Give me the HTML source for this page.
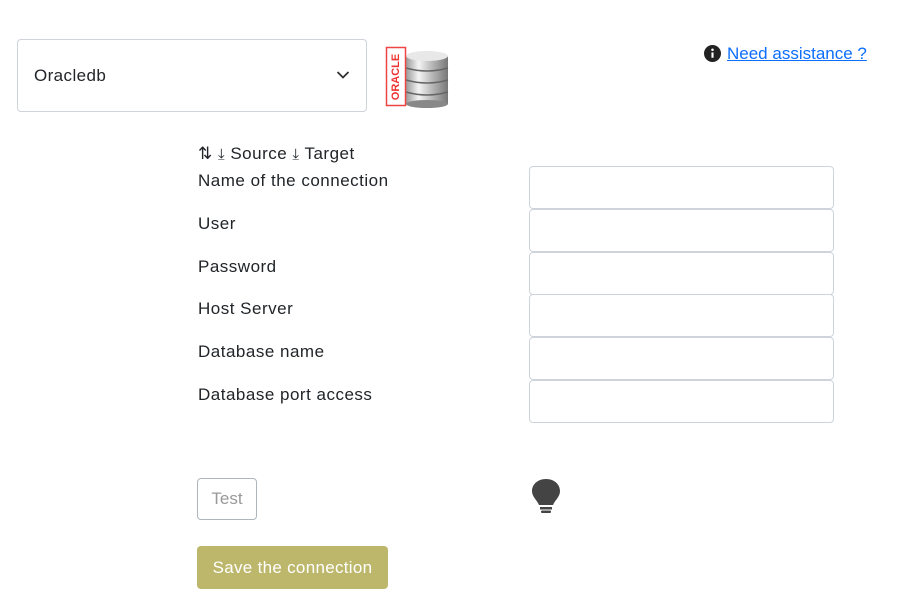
<!DOCTYPE html>
<html><head><style>
*{box-sizing:border-box}
body{margin:0;width:900px;height:609px;background:#fff;font-family:"Liberation Sans",sans-serif;color:#212529;position:relative;overflow:hidden}
.a{position:absolute}
.sel{left:17px;top:39px;width:350px;height:73px;border:1px solid #ced4da;border-radius:4px;font-size:17px;letter-spacing:.4px;padding:26px 0 0 16px}
.lbl{left:198px;font-size:17px;letter-spacing:.5px}
.in{left:529px;width:305px;height:43px;border:1px solid #ced4da;border-radius:4px}
</style></head><body>
<div class="a sel">Oracledb
<svg class="a" style="left:318px;top:30px" width="14" height="10" viewBox="0 0 14 10"><path d="M1.5 2 L7 7.5 L12.5 2" fill="none" stroke="#333" stroke-width="1.8"/></svg></div>
<svg class="a" style="left:384px;top:44px" width="70" height="66" viewBox="0 0 70 66">
<defs><linearGradient id="g" x1="0" x2="1"><stop offset="0" stop-color="#999"/><stop offset=".3" stop-color="#f4f4f4"/><stop offset=".6" stop-color="#bbb"/><stop offset="1" stop-color="#777"/></linearGradient></defs>
<rect x="22" y="12" width="42" height="48" fill="url(#g)"/>
<ellipse cx="43" cy="60" rx="21" ry="4" fill="#888"/>
<ellipse cx="43" cy="12" rx="21" ry="5" fill="#e8e8e8"/>
<path d="M22 24 Q43 30 64 24 M22 36 Q43 42 64 36 M22 48 Q43 54 64 48" stroke="#666" stroke-width="1.5" fill="none"/>
<rect x="2.5" y="3.5" width="19" height="58" fill="#fff" stroke="#e44" stroke-width="1.5"/>
<text x="12" y="33" transform="rotate(-90 12 33)" font-size="11" font-weight="bold" fill="#e33" text-anchor="middle" dominant-baseline="middle" font-family="Liberation Sans">ORACLE</text>
</svg>
<svg class="a" style="left:704px;top:45px" width="17" height="17" viewBox="0 0 16 16"><circle cx="8" cy="8" r="8" fill="#222"/><rect x="7" y="7" width="2" height="5" fill="#fff"/><circle cx="8" cy="4.5" r="1.2" fill="#fff"/></svg>
<div class="a" style="left:727px;top:44px;font-size:17px;color:#0d6efd;text-decoration:underline">Need assistance ?</div>
<div class="a lbl" style="top:144px">⇅ <span style="font-size:15px">⤓</span> Source <span style="font-size:15px">⤓</span> Target</div>
<div class="a lbl" style="top:171px">Name of the connection</div>
<div class="a lbl" style="top:214px">User</div>
<div class="a lbl" style="top:257px">Password</div>
<div class="a lbl" style="top:299px">Host Server</div>
<div class="a lbl" style="top:342px">Database name</div>
<div class="a lbl" style="top:385px">Database port access</div>
<div class="a in" style="top:166px"></div>
<div class="a in" style="top:209px"></div>
<div class="a in" style="top:252px"></div>
<div class="a in" style="top:294px"></div>
<div class="a in" style="top:337px"></div>
<div class="a in" style="top:380px"></div>
<div class="a" style="left:197px;top:478px;width:60px;height:42px;border:1px solid #adb5bd;border-radius:4px;color:#999;font-size:17px;text-align:center;line-height:40px">Test</div>
<svg class="a" style="left:531px;top:478px" width="30" height="36" viewBox="0 0 30 36"><path d="M15 1 C6 1 1 7 1 13 C1 19 6 22 8 27 L22 27 C24 22 29 19 29 13 C29 7 24 1 15 1Z" fill="#444"/><rect x="9" y="29" width="12" height="2.5" fill="#444"/><rect x="10" y="32.5" width="10" height="2.5" rx="1" fill="#444"/></svg>
<div class="a" style="left:197px;top:546px;width:191px;height:43px;background:#bdb76b;border-radius:4px;color:#fff;font-size:17px;letter-spacing:.3px;text-align:center;line-height:43px">Save the connection</div>
</body></html>
